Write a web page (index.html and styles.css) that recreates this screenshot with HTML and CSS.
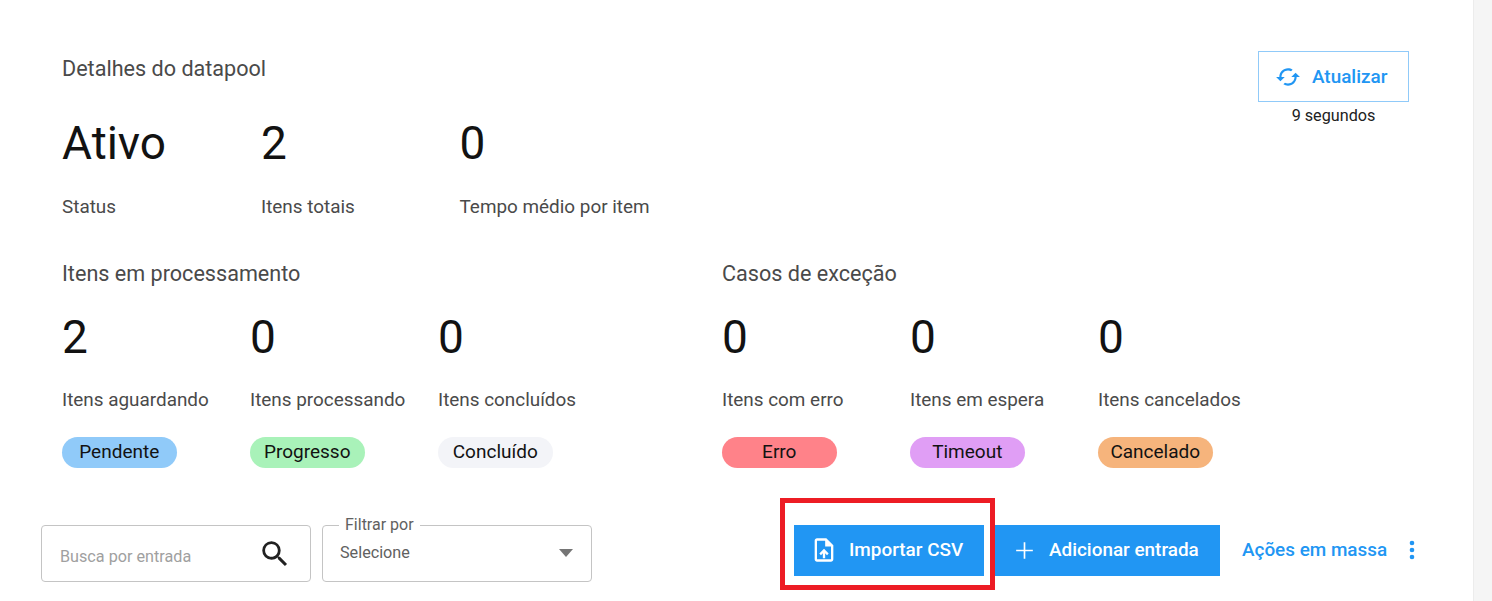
FILE: index.html
```html
<!DOCTYPE html>
<html lang="pt">
<head>
<meta charset="utf-8">
<title>Detalhes do datapool</title>
<link rel="stylesheet" href="styles.css">
</head>
<body>
<div class="page">
  <main class="main">
    <div class="top">
      <div class="summary">
        <h2 class="title">Detalhes do datapool</h2>
        <div class="stats">
          <div class="stat s-status"><div class="num">Ativo</div><div class="label">Status</div></div>
          <div class="stat s-total"><div class="num">2</div><div class="label">Itens totais</div></div>
          <div class="stat s-time"><div class="num">0</div><div class="label">Tempo médio por item</div></div>
        </div>
      </div>
      <div class="refresh">
        <button class="btn-refresh">
          <svg viewBox="0 0 24 24" width="26" height="26" fill="currentColor"><path d="M19 8l-4 4h3c0 3.31-2.69 6-6 6-1.01 0-1.97-.25-2.8-.7l-1.46 1.46C8.97 19.54 10.43 20 12 20c4.42 0 8-3.58 8-8h3l-4-4zM6 12c0-3.31 2.69-6 6-6 1.01 0 1.97.25 2.8.7l1.46-1.46C15.03 4.46 13.57 4 12 4c-4.42 0-8 3.58-8 8H1l4 4 4-4H6z"/></svg>
          Atualizar
        </button>
        <div class="secs">9 segundos</div>
      </div>
    </div>

    <div class="groups">
      <section class="group g-proc">
        <h3 class="title">Itens em processamento</h3>
        <div class="row">
          <div class="cell"><div class="num">2</div><div class="label">Itens aguardando</div><span class="pill p-blue">Pendente</span></div>
          <div class="cell"><div class="num">0</div><div class="label">Itens processando</div><span class="pill p-green">Progresso</span></div>
          <div class="cell"><div class="num">0</div><div class="label">Itens concluídos</div><span class="pill p-grey">Concluído</span></div>
        </div>
      </section>
      <section class="group">
        <h3 class="title">Casos de exceção</h3>
        <div class="row">
          <div class="cell"><div class="num">0</div><div class="label">Itens com erro</div><span class="pill p-red">Erro</span></div>
          <div class="cell"><div class="num">0</div><div class="label">Itens em espera</div><span class="pill p-purple">Timeout</span></div>
          <div class="cell"><div class="num">0</div><div class="label">Itens cancelados</div><span class="pill p-orange">Cancelado</span></div>
        </div>
      </section>
    </div>

    <div class="toolbar">
      <div class="field search">
        <span class="placeholder">Busca por entrada</span>
        <svg viewBox="0 0 24 24" width="34" height="34" fill="#212121"><path d="M15.5 14h-.79l-.28-.27A6.47 6.47 0 0 0 16 9.5 6.5 6.5 0 1 0 9.5 16c1.61 0 3.09-.59 4.23-1.57l.27.28v.79l5 4.99L20.49 19l-4.99-5zm-6 0C7.01 14 5 11.99 5 9.5S7.01 5 9.5 5 14 7.01 14 9.5 11.99 14 9.5 14z"/></svg>
      </div>
      <div class="field select">
        <span class="legend">Filtrar por</span>
        <span class="value">Selecione</span>
        <span class="caret"></span>
      </div>
      <div class="actions">
        <div class="highlight">
          <button class="btn-solid btn-import">
            <svg viewBox="0 0 24 24" width="28" height="28" fill="#fff"><path d="M14 2H6c-1.1 0-2 .9-2 2v16c0 1.1.9 2 2 2h12c1.1 0 2-.9 2-2V8l-6-6zm4 18H6V4h7v5h5v11zM8 15.01l1.41 1.41L11 14.84V19h2v-4.16l1.59 1.59L16 15.01 12.01 11 8 15.01z"/></svg>
            Importar CSV
          </button>
        </div>
        <button class="btn-solid btn-add">
          <svg viewBox="0 0 24 24" width="25" height="25" fill="#fff"><path d="M20 12.8h-7.2V20h-1.6v-7.2H4v-1.6h7.2V4h1.6v7.2H20z"/></svg>
          Adicionar entrada
        </button>
        <button class="btn-link">
          Ações em massa
          <svg viewBox="0 0 24 24" width="28" height="28" fill="currentColor"><path d="M12 8a2 2 0 1 0 0-4 2 2 0 0 0 0 4zm0 2a2 2 0 1 0 0 4 2 2 0 0 0 0-4zm0 6a2 2 0 1 0 0 4 2 2 0 0 0 0-4z"/></svg>
        </button>
      </div>
    </div>
  </main>
  <div class="gutter"></div>
</div>
</body>
</html>
```
FILE: styles.css
```css
* { box-sizing: border-box; }
html, body { margin: 0; height: 601px; overflow: hidden; background: #fff; }
body { font-family: Roboto, "Liberation Sans", sans-serif; color: #121212; }
button { font-family: inherit; cursor: pointer; }

.page { display: flex; height: 601px; }
.main { width: 1473px; flex: none; padding: 53px 0 0 62px; }
.gutter { flex: 1; background: #f5f5f5; border-left: 1px solid #ececec; }

.top { display: flex; justify-content: space-between; padding-right: 64px; }
.title { margin: 0; font-size: 21.6px; line-height: 32px; font-weight: 400; color: #4a4a4a; }
.stats { display: flex; margin-top: 33px; }
.s-status { width: 199px; }
.s-total { width: 198.5px; }
.num { font-size: 46px; line-height: 50px; color: #121212; }
.label { font-size: 18.9px; line-height: 24px; color: #4a4a4a; margin-top: 27px; white-space: nowrap; }

.refresh { display: flex; flex-direction: column; align-items: center; margin-top: -2px; }
.btn-refresh { width: 151px; height: 51px; display: flex; align-items: center; gap: 11px; background: #fff; border: 1px solid #90caf9; color: #2196f3; font-size: 18.9px; font-weight: 500; padding: 0 0 0 16px; }
.secs { font-size: 16.2px; line-height: 20px; margin-top: 4px; color: #212121; }

.groups { display: flex; margin-top: 39px; }
.g-proc { width: 660px; }
.row { display: flex; margin-top: 22px; }
.cell { width: 188px; }
.cell .label { margin-top: 26px; }
.pill { display: flex; align-items: center; justify-content: center; width: 114.5px; height: 31px; margin-top: 25px; padding-bottom: 3px; border-radius: 16px; font-size: 19px; }
.p-blue { background: #90caf9; }
.p-green { background: #a9f2b9; }
.p-grey { background: #f3f4f8; }
.p-red { background: #ff8289; }
.p-purple { background: #e09ef5; }
.p-orange { background: #f6b47c; }

.toolbar { display: flex; margin: 0 0 0 -21px; padding-top: 57px; }
.field { position: relative; height: 57px; border: 1px solid #c4c4c4; border-radius: 4px; display: flex; align-items: center; flex: none; }
.search { width: 270px; padding: 0 18px 0 18px; justify-content: space-between; }
.placeholder { font-size: 16.2px; color: #a0a0a0; margin-top: 5px; }
.select { width: 270px; margin-left: 11px; padding: 0 22px 0 17px; justify-content: space-between; }
.legend { position: absolute; top: -11px; left: 16px; padding: 0 6px; background: #fff; font-size: 16px; line-height: 20px; color: #616161; }
.value { font-size: 16.2px; color: #616161; margin-top: -3px; }
.caret { width: 0; height: 0; border-left: 7px solid transparent; border-right: 7px solid transparent; border-top: 8px solid #757575; margin-right: -4px; margin-top: -2px; }

.actions { display: flex; align-items: flex-start; margin-left: 188px; }
.highlight { margin-top: -27px; padding: 27px 11px 14px 14px; box-shadow: inset 0 0 0 5px #ed1c24; flex: none; }
.btn-solid { display: flex; align-items: center; height: 51px; border: 0; background: #2196f3; color: #fff; font-size: 18.9px; font-weight: 500; padding: 0 0 3px; white-space: nowrap; }
.btn-solid svg, .btn-link svg { margin-top: 2px; }
.btn-import { width: 190px; padding-left: 16px; gap: 11px; }
.btn-add { width: 225px; padding-left: 17px; gap: 12px; }
.btn-link { display: flex; align-items: center; height: 51px; padding: 0 0 3px; margin-left: 22px; background: none; border: 0; color: #2196f3; font-size: 18.9px; font-weight: 500; gap: 11px; white-space: nowrap; }
```
